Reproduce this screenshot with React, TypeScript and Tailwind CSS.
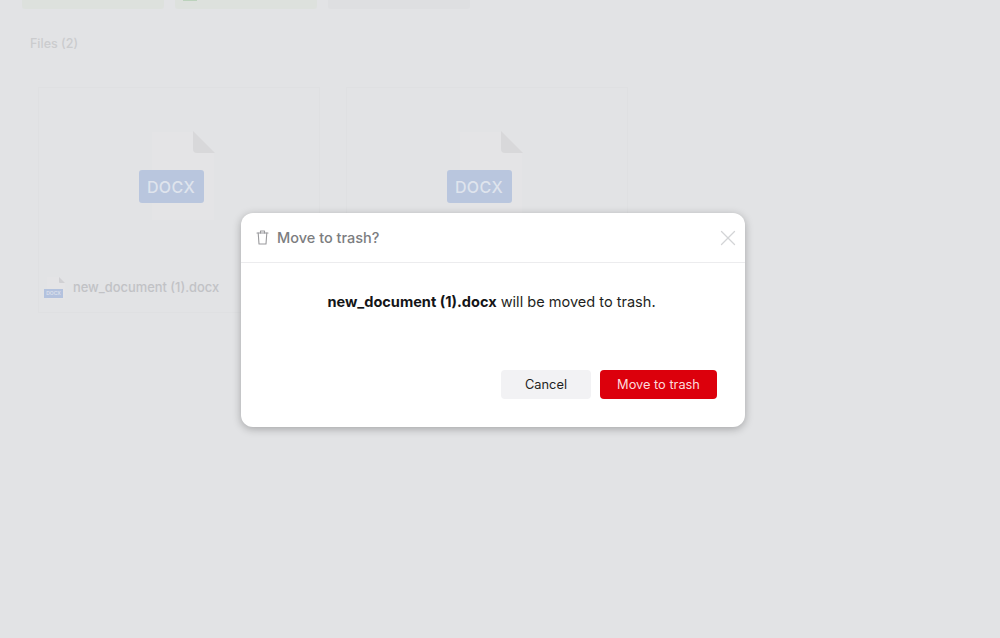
import { X } from "lucide-react";

function FileGlyph() {
  return (
    <div className="relative w-[80px] h-[90px]">
      <svg className="absolute left-[12px] top-0" width="64" height="90" viewBox="0 0 64 90" fill="none">
        <path d="M1 1H42L63 22V89H1Z" fill="#e4e4e6" />
        <path d="M42 0L64 22H46Q42 22 42 18Z" fill="#d8d8da" />
      </svg>
      <div className="absolute left-0 top-[39px] w-[65px] h-[33px] rounded-[3px] bg-[#b9c6de] flex items-center justify-center text-[#dfe4ed] text-[16px] font-medium tracking-[0.4px]">
        DOCX
      </div>
    </div>
  );
}

function FileCard({ showName }: { showName: boolean }) {
  return (
    <div className="w-[282px] h-[226px] border border-[#dfe0e2] bg-[#e2e3e5] flex flex-col">
      <div className="flex justify-center pt-[43px] pr-[1px]">
        <FileGlyph />
      </div>
      {showName && (
        <div className="mt-auto mb-[13px] flex items-center gap-[8px] pl-[5px]">
          <div className="relative w-[21px] h-[22px]">
            <svg className="absolute left-[3px] top-0" width="18" height="22" viewBox="0 0 18 22" fill="none">
              <path d="M0 0H12L18 6V22H0Z" fill="#e4e4e6" />
              <path d="M12 0L18 6H13Q12 6 12 5Z" fill="#d0d0d3" />
            </svg>
            <div className="absolute left-0 top-[12px] w-[19px] h-[9px] bg-[#b3c2de] flex items-center justify-center text-[5px] leading-none font-medium text-[#e0e5ee]">
              DOCX
            </div>
          </div>
          <span className="text-[12.9px] font-medium text-[#c1c2c5]">new_document (1).docx</span>
        </div>
      )}
    </div>
  );
}

export default function App() {
  return (
    <div className="relative h-[638px] w-[1000px] overflow-hidden bg-[#e2e3e5] font-['Inter',sans-serif]">
      {/* Background page */}
      <div className="flex gap-[11px] pl-[22px]">
        <div className="w-[142px] h-[9px] rounded-b-[3px] bg-[#dde1dd]" />
        <div className="w-[142px] h-[9px] rounded-b-[3px] bg-[#dde1dd]">
          <div className="ml-[8px] w-[14px] h-[1px] bg-[#bcd2bc]" />
        </div>
        <div className="w-[142px] h-[9px] rounded-b-[3px] bg-[#dedfe1]" />
      </div>
      <h2 className="mt-[27px] ml-[30px] text-[12.5px] leading-[16px] font-medium text-[#cbccce]">Files (2)</h2>
      <div className="mt-[35px] ml-[38px] flex gap-[26px]">
        <FileCard showName />
        <FileCard showName={false} />
      </div>

      {/* Modal */}
      <div className="absolute left-[241px] top-[213px] w-[504px] h-[214px] rounded-[12px] bg-white shadow-[0_2px_8px_rgba(0,0,0,0.28)] flex flex-col">
        <div className="h-[50px] flex items-center border-b border-[#ececee] pl-[15px] pr-[4px]">
          <svg width="13" height="15" viewBox="0 0 13 15" fill="none" stroke="#9a9a9d" strokeWidth="1.1" strokeLinecap="round" strokeLinejoin="round">
            <path d="M1 3H12" />
            <path d="M4.5 3V1H8.5V3" />
            <path d="M2.2 3L3 14H10L10.8 3" />
          </svg>
          <span className="ml-[8px] text-[14.5px] font-medium text-[#7c7d80]">Move to trash?</span>
          <button className="ml-auto text-[#d3d4d6]">
            <X size={26} strokeWidth={1.2} />
          </button>
        </div>
        <p className="mt-[30px] pr-[3px] text-center text-[14.55px] leading-[18px] text-[#1e1f22]">
          <span className="font-bold text-[#141517]">new_document (1).docx</span> will be moved to trash.
        </p>
        <div className="mt-auto mb-[28px] flex justify-end gap-[9px] pr-[28px]">
          <button className="w-[90px] h-[29px] rounded-[4px] bg-[#f2f2f4] text-[12.8px] text-[#1e1f22]">Cancel</button>
          <button className="w-[117px] h-[29px] rounded-[4px] bg-[#dc000c] text-[12.8px] text-[#fbdcdc]">Move to trash</button>
        </div>
      </div>
    </div>
  );
}
